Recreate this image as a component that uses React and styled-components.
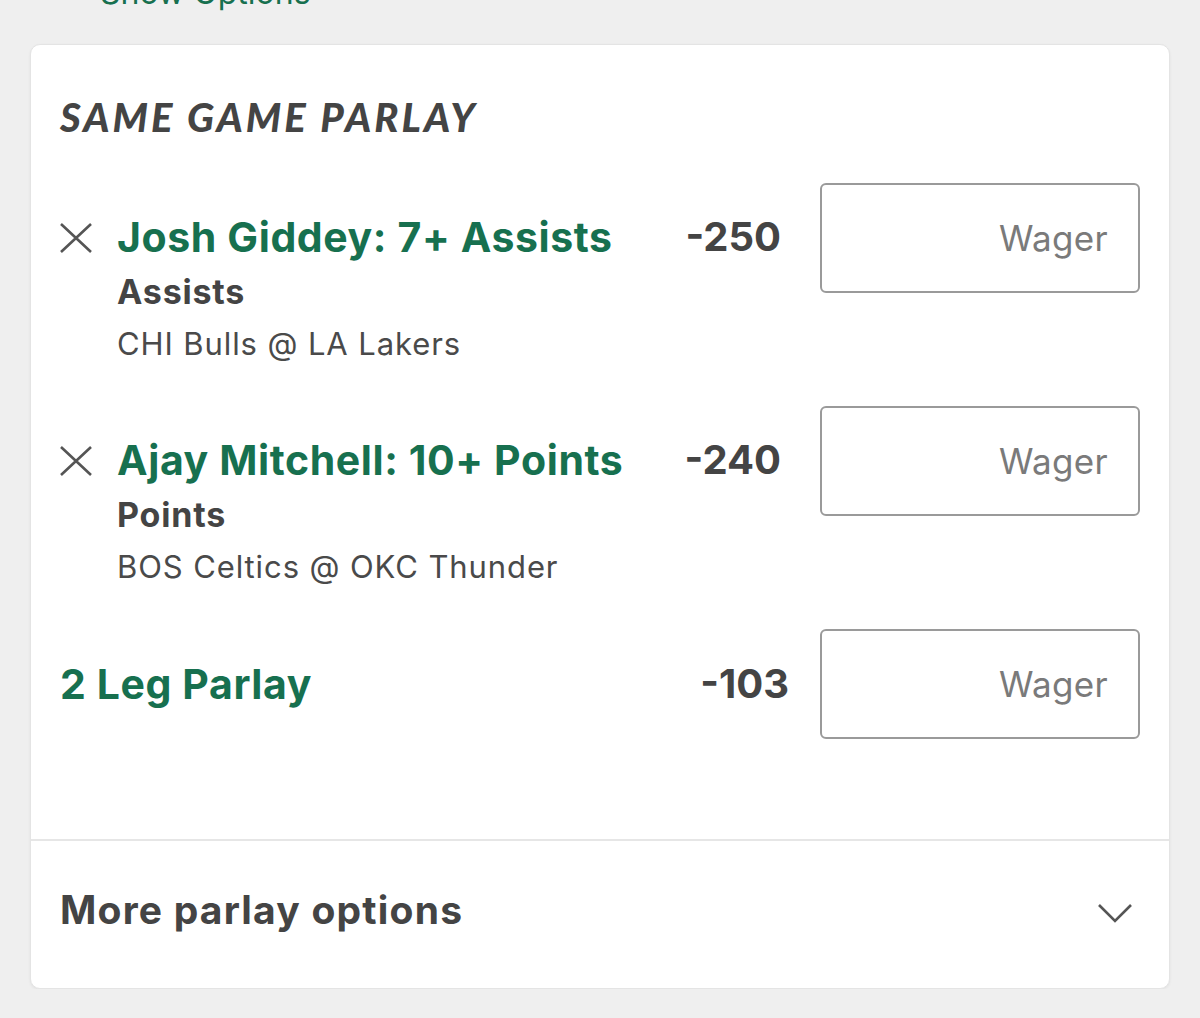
import React from 'react'
import styled, { createGlobalStyle } from 'styled-components'

const GlobalStyle = createGlobalStyle`
    body {
        margin: 0;
        background: #efefef;
        font-family: Inter, Roboto, "Liberation Sans", sans-serif;
        color: #444;
    }
`

const Page = styled.div`
    padding: 0 30px;
`

const ShowOptions = styled.div`
    margin-top: -26px;
    padding-left: 70px;
    font-size: 32px;
    line-height: 38px;
    color: #17704f;
`

const Card = styled.div`
    margin-top: 32px;
    background: #fff;
    border: 1px solid #e4e4e4;
    border-radius: 10px;
    box-shadow: 0 1px 3px rgba(0, 0, 0, 0.06);
`

const CardBody = styled.div`
    padding: 48px 29px 100px;
`

const Title = styled.h2`
    margin: 0 0 42px;
    font-family: Lato, "Open Sans", sans-serif;
    font-style: italic;
    font-weight: 900;
    font-size: 40px;
    line-height: 48px;
    letter-spacing: 3px;
    color: #444;
`

const LegList = styled.div`
    display: flex;
    flex-direction: column;
    gap: 42px;
`

const Leg = styled.div`
    display: flex;
    align-items: flex-start;
`

const RemoveButton = styled.button`
    flex: none;
    width: 32px;
    height: 30px;
    margin: 40px 25px 0 0;
    padding: 0;
    border: 0;
    background: none;
    color: #555;
    cursor: pointer;
`

const Info = styled.div`
    flex: 1;
    min-width: 0;
    padding-top: 30px;
`

const Selection = styled.div`
    font-weight: 700;
    font-size: 41px;
    line-height: 48px;
    letter-spacing: 0.6px;
    color: #17704f;
`

const Market = styled.div`
    margin-top: 10px;
    font-weight: 700;
    font-size: 34px;
    line-height: 42px;
    letter-spacing: 0.8px;
    color: #444;
`

const Game = styled.div`
    margin-top: 11px;
    font-size: 31px;
    line-height: 40px;
    letter-spacing: 0.9px;
    color: #4a4a4a;
`

const ParlayRow = styled.div`
    display: flex;
    align-items: center;
    height: 110px;
`

const ParlayLabel = styled.div`
    flex: 1;
    font-weight: 700;
    font-size: 41px;
    line-height: 48px;
    letter-spacing: 0.6px;
    color: #17704f;
`

const Odds = styled.div`
    flex: none;
    margin-right: ${p => p.$gap}px;
    padding-top: ${p => p.$top}px;
    font-weight: 700;
    font-size: 40px;
    line-height: 48px;
    color: #444;
`

const Wager = styled.input`
    flex: none;
    box-sizing: border-box;
    width: 320px;
    height: 110px;
    padding: 0 30px;
    border: 2px solid #9a9a9a;
    border-radius: 6px;
    background: #fff;
    font-family: inherit;
    font-size: 35px;
    letter-spacing: 0.3px;
    text-align: right;
    color: #444;
    outline: none;

    &::placeholder {
        color: #7a7a7a;
    }
`

const Footer = styled.div`
    display: flex;
    align-items: center;
    justify-content: space-between;
    box-sizing: border-box;
    height: 149px;
    padding: 0 37px 10px 29px;
    border-top: 2px solid #e6e6e6;
`

const FooterLabel = styled.div`
    font-weight: 700;
    font-size: 39px;
    line-height: 48px;
    letter-spacing: 1.2px;
    color: #444;
`

const ChevronBox = styled.div`
    padding-top: 8px;
    line-height: 0;
`

const XIcon = () => (
    <svg width="32" height="30" viewBox="0 0 32 30" fill="none" stroke="currentColor" strokeWidth="2.6">
        <path d="M1 1 L31 29 M31 1 L1 29" />
    </svg>
)

const Chevron = () => (
    <svg width="34" height="19" viewBox="0 0 34 19" fill="none" stroke="#555" strokeWidth="2.6">
        <path d="M1 1 L17 17 L33 1" />
    </svg>
)

const legs = [
    { selection: 'Josh Giddey: 7+ Assists', market: 'Assists', game: 'CHI Bulls @ LA Lakers', odds: '-250' },
    { selection: 'Ajay Mitchell: 10+ Points', market: 'Points', game: 'BOS Celtics @ OKC Thunder', odds: '-240' },
]

const App = () => {
    return (
        <Page>
            <GlobalStyle />
            <ShowOptions>Show Options</ShowOptions>
            <Card>
                <CardBody>
                    <Title>SAME GAME PARLAY</Title>
                    <LegList>
                        {legs.map(leg =>
                            <Leg key={leg.selection}>
                                <RemoveButton aria-label="Remove">
                                    <XIcon />
                                </RemoveButton>
                                <Info>
                                    <Selection>{leg.selection}</Selection>
                                    <Market>{leg.market}</Market>
                                    <Game>{leg.game}</Game>
                                </Info>
                                <Odds $gap={39} $top={30}>{leg.odds}</Odds>
                                <Wager placeholder="Wager" />
                            </Leg>
                        )}
                        <ParlayRow>
                            <ParlayLabel>2 Leg Parlay</ParlayLabel>
                            <Odds $gap={31} $top={0}>-103</Odds>
                            <Wager placeholder="Wager" />
                        </ParlayRow>
                    </LegList>
                </CardBody>
                <Footer>
                    <FooterLabel>More parlay options</FooterLabel>
                    <ChevronBox>
                        <Chevron />
                    </ChevronBox>
                </Footer>
            </Card>
        </Page>
    )
}

export default App
